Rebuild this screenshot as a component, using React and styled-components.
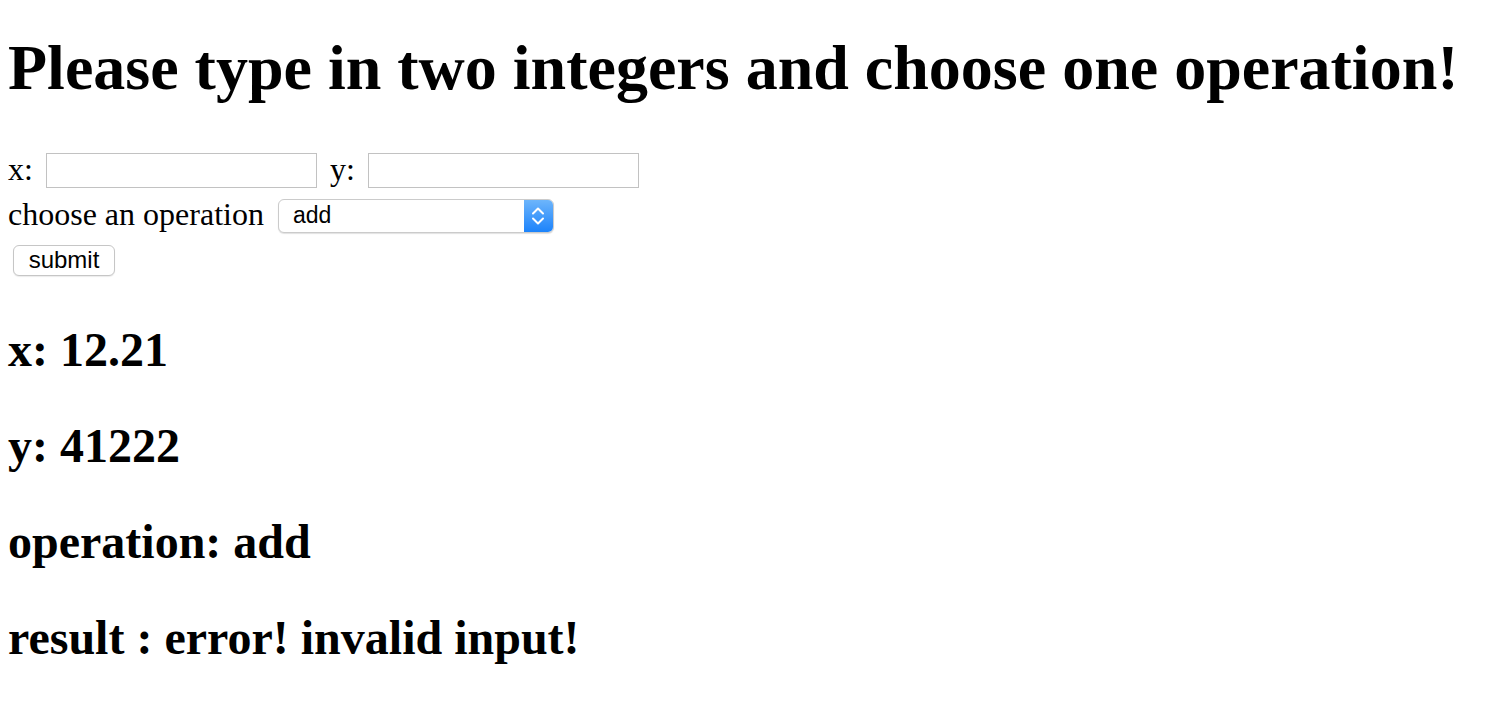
import React from 'react';
import styled, { createGlobalStyle } from 'styled-components';

const GlobalStyle = createGlobalStyle`
  body {
    margin: 0;
    background: #fff;
    color: #000;
    font-family: 'Liberation Serif', 'Times New Roman', serif;
  }
`;

const App = () => {
  return (
    <>
      <GlobalStyle />
      <Page>
        <Title>Please type in two integers and choose one operation!</Title>
        <Form onSubmit={(e) => e.preventDefault()}>
          <Row>
            <Label>x:</Label>
            <TextInput type="text" />
            <Label>y:</Label>
            <TextInput type="text" />
          </Row>
          <Row>
            <Label>choose an operation</Label>
            <SelectBox>
              <SelectText>add</SelectText>
              <SelectArrow>
                <svg width="16" height="20" viewBox="0 0 16 20">
                  <path
                    d="M3 7.5 L8 2.5 L13 7.5 M3 12.5 L8 17.5 L13 12.5"
                    fill="none"
                    stroke="#fff"
                    strokeWidth="2"
                    strokeLinecap="round"
                    strokeLinejoin="round"
                  />
                </svg>
              </SelectArrow>
            </SelectBox>
          </Row>
          <Row>
            <SubmitButton type="submit">submit</SubmitButton>
          </Row>
        </Form>
        <Result>x: 12.21</Result>
        <Result>y: 41222</Result>
        <Result>operation: add</Result>
        <Result>result : error! invalid input!</Result>
      </Page>
    </>
  );
};

const Page = styled.div`
  padding: 31px 0 0 8px;
`;

const Title = styled.h1`
  margin: 0 0 44px;
  font-size: 64px;
  font-weight: bold;
  line-height: 73px;
  white-space: nowrap;
`;

const Form = styled.form`
  display: flex;
  flex-direction: column;
`;

const Row = styled.div`
  display: flex;
  align-items: center;
  height: 45px;
`;

const Label = styled.span`
  font-size: 32px;
  line-height: 36px;
  padding-bottom: 4px;
`;

const TextInput = styled.input`
  box-sizing: border-box;
  width: 271px;
  height: 35px;
  margin: 0 13px;
  padding: 0 6px;
  border: 1px solid #c2c2c2;
  border-radius: 0;
  outline: none;
  font-size: 22px;
`;

const SelectBox = styled.div`
  box-sizing: border-box;
  display: flex;
  align-items: center;
  width: 276px;
  height: 34px;
  margin-left: 14px;
  border: 1px solid #cbcbcb;
  border-radius: 6px;
  box-shadow: 0 1px 1px rgba(0, 0, 0, 0.12);
  background: #fff;
  overflow: hidden;
`;

const SelectText = styled.span`
  flex: 1;
  padding-left: 14px;
  font-family: 'Liberation Sans', Arial, sans-serif;
  font-size: 23px;
`;

const SelectArrow = styled.span`
  display: flex;
  align-items: center;
  justify-content: center;
  width: 29px;
  height: 100%;
  background: linear-gradient(#6db5fb, #1c83fb);
`;

const SubmitButton = styled.button`
  box-sizing: border-box;
  width: 102px;
  height: 31px;
  margin-left: 5px;
  padding: 0 0 2px;
  border: 1px solid #c6c6c6;
  border-radius: 6px;
  background: #fff;
  box-shadow: 0 1px 1px rgba(0, 0, 0, 0.08);
  font-family: 'Liberation Sans', Arial, sans-serif;
  font-size: 24px;
  color: #000;
`;

const Result = styled.h2`
  margin: 39px 0 0;
  font-size: 48px;
  font-weight: bold;
  line-height: 55px;
  & + & {
    margin-top: 41px;
  }
`;

export default App;
